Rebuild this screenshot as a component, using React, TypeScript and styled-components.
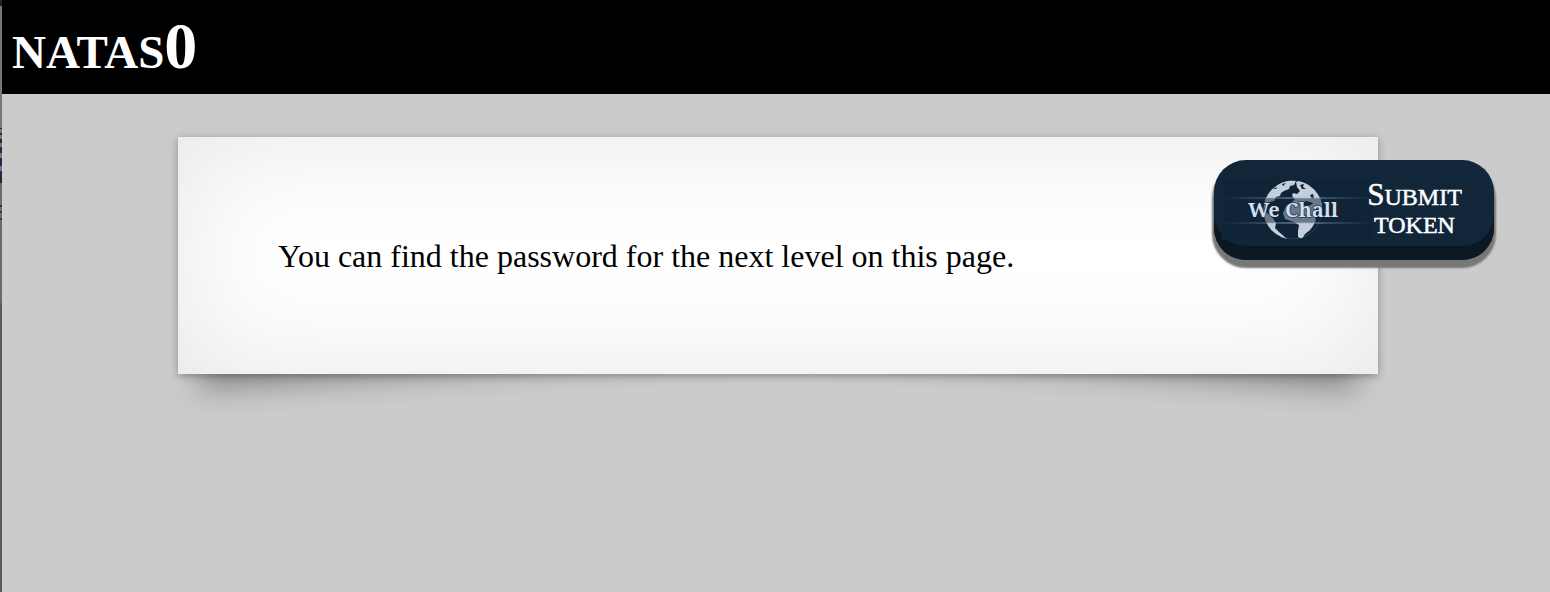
import React from 'react';
import styled, { createGlobalStyle, css } from 'styled-components';

const GlobalStyle = createGlobalStyle`
  * { box-sizing: border-box; }
  body {
    margin: 0;
    background: #cbcbcb;
    font-family: "Liberation Serif", "Times New Roman", serif;
    overflow: hidden;
  }
`;

const Page = styled.div`
  display: flex;
  height: 592px;
`;

const WindowEdge = styled.div`
  flex: 0 0 2px;
  background: linear-gradient(
    #222 0 6px, #777 6px 128px, #1c2a44 128px 129px, #777 129px 133px,
    #1c2a44 133px 135px, #777 135px 139px, #1c2a44 139px 143px, #777 143px 147px,
    #1c2a44 147px 153px, #777 153px 158px, #1c2a44 158px 166px, #777 166px 171px,
    #1c2a44 171px 183px, #6e6e6e 183px 205px, #3a3836 205px 207px, #6e6e6e 207px 211px,
    #3a3836 211px 213px, #6e6e6e 213px 218px, #3a3836 218px 220px, #6a6a6a 220px 302px,
    #555b63 304px, #5c5c5c
  );
`;

const Main = styled.div`
  flex: 1;
  min-width: 0;
`;

const Header = styled.header`
  display: flex;
  height: 94px;
  padding: 13px 10px 0;
  background: #000;
`;

const Title = styled.h1`
  margin: 0;
  color: #fff;
  font-size: 47px;
  line-height: 78px;
  font-weight: 700;
  text-transform: uppercase;
`;

const TitleDigit = styled.span`
  font-size: 66px;
  line-height: 1px;
`;

const Content = styled.main`
  position: relative;
  display: flex;
  align-items: center;
  width: 1200px;
  height: 237px;
  margin: 43px 0 0 176px;
  padding: 2px 100px 0;
`;

const Curl = styled.div<{ $side: 'left' | 'right' }>`
  position: absolute;
  bottom: 34px;
  width: 600px;
  height: 47px;
  box-shadow: 0 30px 28px rgba(0, 0, 0, 0.3);
  ${({ $side }) =>
    $side === 'left'
      ? css`left: 27px; transform: skew(-8deg) rotate(-4deg);`
      : css`right: 27px; transform: skew(8deg) rotate(4deg);`}
`;

const Paper = styled.div`
  position: absolute;
  inset: 0;
  background: #fff;
  box-shadow: 0 2px 8px rgba(0, 0, 0, 0.3), inset 0 0 120px rgba(0, 0, 0, 0.1);
`;

const Message = styled.p`
  position: relative;
  margin: 0;
  font-size: 32px;
  line-height: 37px;
  white-space: nowrap;
`;

const SubmitButton = styled.a`
  position: absolute;
  top: 23px;
  left: 1036px;
  display: flex;
  align-items: center;
  width: 280px;
  height: 100px;
  padding: 0 32px 0 8px;
  border-radius: 32px;
  background: #12263a;
  box-shadow: inset 0 -14px 0 #0b1722, 0 6px 2px 2px #777;
  color: #fff;
`;

const ButtonLabel = styled.span`
  flex: 1;
  display: flex;
  flex-direction: column;
  align-items: center;
  margin: 1px 0 0 -5px;
  font-size: 24px;
  line-height: 28px;
  text-transform: uppercase;
  white-space: nowrap;
  -webkit-text-stroke: 0.5px #fff;
`;

const LabelLine = styled.span`
  height: 28px;
`;

const Initial = styled.span`
  font-size: 31px;
  line-height: 1px;
`;

const Logo = styled.svg`
  flex: 0 0 150px;
  height: 60px;
`;

function WeChallLogo() {
  return (
    <Logo viewBox="0 0 150 60">
      <defs>
        <clipPath id="globe"><circle cx="71" cy="30" r="29.5" /></clipPath>
        <linearGradient id="glow">
          <stop offset="0" stopColor="#7f9db8" stopOpacity="0" />
          <stop offset=".45" stopColor="#9db6cc" stopOpacity=".8" />
          <stop offset=".6" stopColor="#9db6cc" stopOpacity=".8" />
          <stop offset="1" stopColor="#7f9db8" stopOpacity="0" />
        </linearGradient>
      </defs>
      <rect width="150" height="60" fill="#102438" />
      <circle cx="71" cy="30" r="29" fill="none" stroke="#5f7890" strokeWidth=".6" opacity=".5" />
      <g clipPath="url(#globe)">
        <path fill="#c3cfdd" d="M40 20L46 9L56 1L68 0L74 1L72 5L68 6L67 9L62 11L59 13L58 16L54 17L52 21L47 22L45 27L42 28L45 33L50 37L54 43L53 48L57 52L65 59L60 60L40 52Z" />
        <path fill="#c3cfdd" d="M74 2L80 0L92 4L101 16V26L98 31L94 27L91 33L94 40L91 46L88 50L83 54L80 59L76 57V51L77 45L72 42L63 39L61 33L64 26L69 23L73 19L70 16L71 13L75 14L78 11L75 7Z" />
        <path fill="#102438" d="M79 24L84 21L91 23L89 25L83 26ZM88 15L91 14L92 18L90 19ZM51 9L55 7L54 9ZM60 4L64 3L61 6ZM78 5L82 4L81 7L84 9L80 9Z" />
        <path fill="#0c2339" opacity=".5" d="M40 18H104V43H40Z" />
      </g>
      <rect y="17.5" width="150" height="1" fill="url(#glow)" />
      <rect y="42.5" width="150" height="1" fill="url(#glow)" />
      <text x="26" y="37" fill="#d3deea" stroke="#10253a" strokeWidth="1.2" paintOrder="stroke" fontFamily="'Noto Serif', 'DejaVu Serif', serif" fontWeight="700" fontSize="20" textLength="90">We Chall</text>
    </Logo>
  );
}

export default function App() {
  return (
    <>
      <GlobalStyle />
      <Page>
        <WindowEdge />
        <Main>
          <Header><Title>natas<TitleDigit>0</TitleDigit></Title></Header>
          <Content>
            <Curl $side="left" />
            <Curl $side="right" />
            <Paper />
            <Message>You can find the password for the next level on this page.</Message>
            <SubmitButton>
              <WeChallLogo />
              <ButtonLabel>
                <LabelLine><Initial>S</Initial>ubmit</LabelLine>
                <LabelLine>token</LabelLine>
              </ButtonLabel>
            </SubmitButton>
          </Content>
        </Main>
      </Page>
    </>
  );
}
